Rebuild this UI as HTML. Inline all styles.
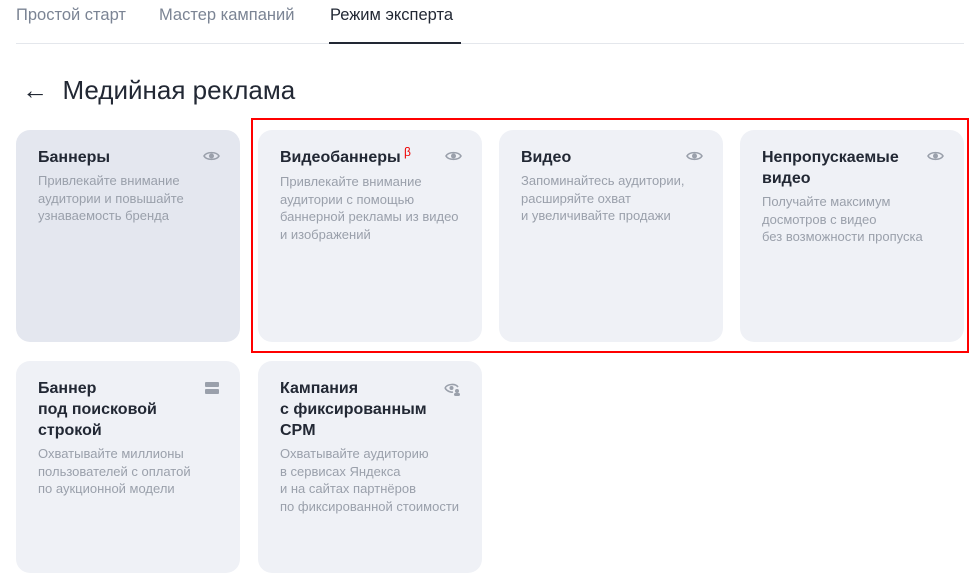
<!DOCTYPE html><html><head><meta charset="utf-8"><style>
body{margin:0;width:974px;height:586px;background:#fff;font-family:"Liberation Sans",sans-serif;position:relative;overflow:hidden}
.tab{position:absolute;top:6px;font-size:16.5px;color:#7b8494}
.c{position:absolute;width:224px;height:212px;border-radius:14px;background:#eff1f6;box-sizing:border-box;padding:17px 22px}
.t{font-size:16px;font-weight:bold;color:#222834;line-height:21px;white-space:nowrap;position:relative}
.d{font-size:13px;color:#9aa0ab;line-height:17.5px;margin-top:4px;white-space:nowrap}
.ic{position:absolute;right:20px;top:20px}
</style></head><body>
<div class="tab" style="left:16px">Простой старт</div>
<div class="tab" style="left:159px">Мастер кампаний</div>
<div class="tab" style="left:330px;color:#222834">Режим эксперта</div>
<div style="position:absolute;left:16px;right:10px;top:43px;height:1px;background:#e4e7ec"></div>
<div style="position:absolute;left:329px;width:132px;top:42px;height:2px;background:#222834"></div>
<div style="position:absolute;left:22px;top:75px;font-size:26px;color:#222834">←&nbsp; Медийная реклама</div>
<svg width="0" height="0" style="position:absolute"><defs><g id="eye"><path d="M1 6C3.5 1.5 13.5 1.5 16 6C13.5 10.5 3.5 10.5 1 6Z" fill="none" stroke="#9aa0ab" stroke-width="1.6"/><circle cx="8.5" cy="6" r="2.5" fill="#9aa0ab"/></g></defs></svg>
<div class="c" style="left:16px;top:130px;background:#e4e7ef"><div class="t">Баннеры</div><div class="d">Привлекайте внимание<br>аудитории и повышайте<br>узнаваемость бренда</div><svg class="ic" width="17" height="12"><use href="#eye"/></svg></div>
<div class="c" style="left:258px;top:130px"><div class="t">Видеобаннеры<span style="color:#e00;font-size:12px;font-weight:normal;position:relative;top:-6px"> β</span></div><div class="d">Привлекайте внимание<br>аудитории с помощью<br>баннерной рекламы из видео<br>и изображений</div><svg class="ic" width="17" height="12"><use href="#eye"/></svg></div>
<div class="c" style="left:499px;top:130px"><div class="t">Видео</div><div class="d">Запоминайтесь аудитории,<br>расширяйте охват<br>и увеличивайте продажи</div><svg class="ic" width="17" height="12"><use href="#eye"/></svg></div>
<div class="c" style="left:740px;top:130px"><div class="t">Непропускаемые<br>видео</div><div class="d">Получайте максимум<br>досмотров с видео<br>без возможности пропуска</div><svg class="ic" width="17" height="12"><use href="#eye"/></svg></div>
<div class="c" style="left:16px;top:361px"><div class="t">Баннер<br>под поисковой<br>строкой</div><div class="d">Охватывайте миллионы<br>пользователей с оплатой<br>по аукционной модели</div><svg class="ic" width="16" height="14"><rect x="1" y="1" width="14" height="5" rx="1" fill="#9aa0ab"/><rect x="1" y="8" width="14" height="5" rx="1" fill="#9aa0ab"/></svg></div>
<div class="c" style="left:258px;top:361px"><div class="t">Кампания<br>с фиксированным<br>CPM</div><div class="d">Охватывайте аудиторию<br>в сервисах Яндекса<br>и на сайтах партнёров<br>по фиксированной стоимости</div><svg class="ic" width="18" height="16"><path d="M1 7C3.5 2.5 11.5 2.5 14 6" fill="none" stroke="#9aa0ab" stroke-width="1.6"/><path d="M1 7C3 10.5 7 11.5 9 11" fill="none" stroke="#9aa0ab" stroke-width="1.6"/><circle cx="7.5" cy="7" r="2" fill="#9aa0ab"/><circle cx="13" cy="10" r="2" fill="#9aa0ab"/><rect x="10" y="12" width="6" height="3" rx="1.5" fill="#9aa0ab"/></svg></div>
<div style="position:absolute;left:251px;top:118px;width:718px;height:235px;border:2px solid #f00;box-sizing:border-box"></div>
</body></html>
